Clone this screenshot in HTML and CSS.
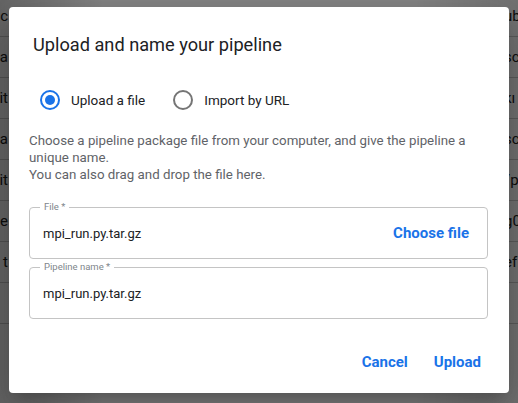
FILE: index.html
```html
<!DOCTYPE html>
<html>
<head>
<meta charset="utf-8">
<link rel="stylesheet" href="styles.css">
</head>
<body>
<div class="page">
  <div class="row"><span class="l">nc</span><span class="r">ub</span></div>
  <div class="row"><span class="l">na</span><span class="r">sc</span></div>
  <div class="row"><span class="l">it</span><span class="r">kı</span></div>
  <div class="row"><span class="l">na</span><span class="r">sc</span></div>
  <div class="row"><span class="l">it</span><span class="r">/p</span></div>
  <div class="row"><span class="l">e</span><span class="r">g0</span></div>
  <div class="row"><span class="l">t</span><span class="r">ef</span></div>
  <div class="row"><span class="l"></span><span class="r"></span></div>
</div>
<div class="overlay"></div>
<div class="dialog">
  <h1 class="title">Upload and name your pipeline</h1>
  <div class="radios">
    <label class="radio">
      <span class="circle checked"><span class="dot"></span></span>
      <span class="rlabel">Upload a file</span>
    </label>
    <label class="radio">
      <span class="circle"></span>
      <span class="rlabel">Import by URL</span>
    </label>
  </div>
  <p class="desc">Choose a pipeline package file from your computer, and give the pipeline a unique name.<br>You can also drag and drop the file here.</p>
  <div class="field">
    <span class="flabel">File *</span>
    <span class="value">mpi_run.py.tar.gz</span>
    <span class="choose">Choose file</span>
  </div>
  <div class="field">
    <span class="flabel">Pipeline name *</span>
    <span class="value">mpi_run.py.tar.gz</span>
  </div>
  <div class="actions">
    <span class="btn">Cancel</span>
    <span class="btn">Upload</span>
  </div>
</div>
</body>
</html>
```
FILE: styles.css
```css
html, body {
  margin: 0;
  padding: 0;
}
body {
  width: 518px;
  height: 403px;
  overflow: hidden;
  background: #fff;
  font-family: Roboto, "Liberation Sans", sans-serif;
  position: relative;
}
.page {
  margin-top: -4px;
}
.row {
  height: 40px;
  border-bottom: 1px solid #ccc;
  display: flex;
  justify-content: space-between;
  align-items: center;
  font-size: 15px;
  color: #222;
}
.row .l {
  width: 12px;
  overflow: hidden;
  display: flex;
  justify-content: flex-end;
  margin-left: -4px;
}
.row .r {
  width: 14px;
  overflow: hidden;
  white-space: nowrap;
}
.overlay {
  position: absolute;
  inset: 0;
  background: linear-gradient(to right, rgba(0,0,0,0.6), rgba(0,0,0,0.48) 20%, rgba(0,0,0,0.48) 80%, rgba(0,0,0,0.55));
}
.dialog {
  position: absolute;
  left: 9px;
  top: 7px;
  width: 500px;
  height: 386px;
  box-sizing: border-box;
  background: #fff;
  border-radius: 4px;
  box-shadow: 0 11px 15px -7px rgba(0,0,0,.2), 0 24px 38px 3px rgba(0,0,0,.14), 0 9px 46px 8px rgba(0,0,0,.12);
  padding: 0 21px 0 20px;
  display: flex;
  flex-direction: column;
}
.title {
  margin: 27px 0 0 4px;
  font-size: 18.2px;
  font-weight: 400;
  line-height: 22px;
  color: #202124;
}
.radios {
  display: flex;
  margin-top: 34px;
  margin-left: 11px;
  gap: 28px;
}
.radio {
  display: flex;
  align-items: center;
  gap: 11px;
}
.circle {
  width: 16px;
  height: 16px;
  border: 2px solid #757575;
  border-radius: 50%;
  display: flex;
  align-items: center;
  justify-content: center;
}
.circle.checked {
  border-color: #1a73e8;
}
.dot {
  width: 10px;
  height: 10px;
  border-radius: 50%;
  background: #1a73e8;
}
.rlabel {
  font-size: 13.5px;
  color: #202124;
}
.desc {
  margin: 22px 0 0 0;
  font-size: 13.3px;
  line-height: 17px;
  color: #5f6368;
}
.field {
  position: relative;
  margin-top: 24px;
  height: 50px;
  border: 1px solid #c4c4c4;
  border-radius: 4px;
  display: flex;
  align-items: center;
  justify-content: space-between;
  padding: 0 18px 0 13px;
}
.field + .field {
  margin-top: 8px;
}
.flabel {
  position: absolute;
  top: -7px;
  left: 10px;
  padding: 0 4px;
  background: #fff;
  font-size: 9.5px;
  line-height: 12px;
  color: #80868b;
}
.value {
  font-size: 13px;
  color: #202124;
}
.choose, .btn {
  font-size: 15px;
  font-weight: 700;
  color: #1a73e8;
}
.actions {
  display: flex;
  justify-content: flex-end;
  gap: 26px;
  margin-top: 34px;
  padding-right: 7px;
}
```
